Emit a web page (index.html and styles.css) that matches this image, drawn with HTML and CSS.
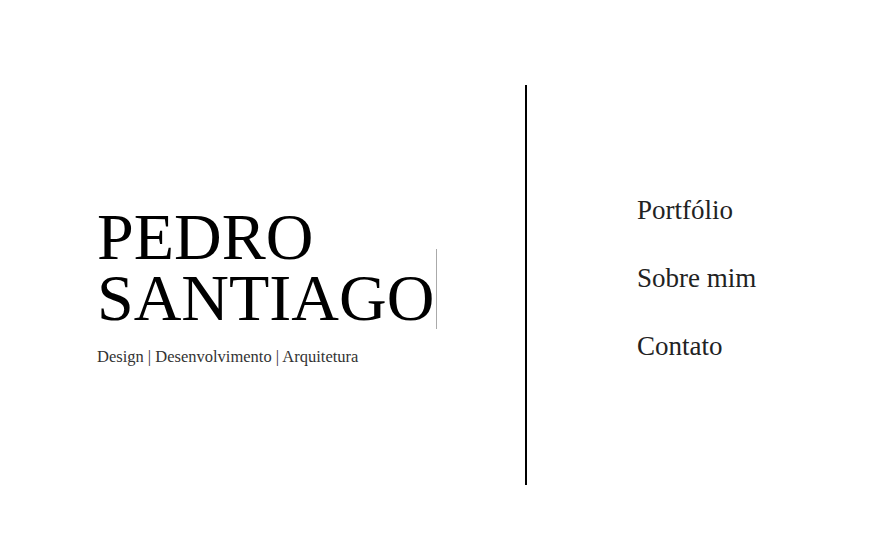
FILE: index.html
```html
<!DOCTYPE html>
<html lang="pt-BR">
<head>
<meta charset="utf-8">
<title>Pedro Santiago</title>
<link rel="stylesheet" href="styles.css">
</head>
<body>
<main class="page">
  <section class="intro">
    <h1 class="name">PEDRO<br><span class="typed">SANTIAGO</span></h1>
    <p class="tagline">Design | Desenvolvimento | Arquitetura</p>
  </section>
  <div class="divider"></div>
  <nav class="menu">
    <a href="#" class="menu-item">Portfólio</a>
    <a href="#" class="menu-item">Sobre mim</a>
    <a href="#" class="menu-item">Contato</a>
  </nav>
</main>
</body>
</html>
```
FILE: styles.css
```css
* { box-sizing: border-box; }
html, body {
  margin: 0;
  padding: 0;
  background: #fff;
}
body {
  font-family: "Liberation Serif", "DejaVu Serif", serif;
  color: #000;
}
.page {
  display: flex;
  align-items: center;
  height: 553px;
  padding-top: 17px;
}
.intro {
  width: 525px;
  padding-left: 97px;
  margin-top: 2px;
  display: flex;
  flex-direction: column;
}
.name {
  margin: 0;
  font-weight: 400;
  font-size: 66px;
  line-height: 61px;
  padding-top: 0;
  letter-spacing: 0;
}
.typed {
  display: inline-block;
  position: relative;
  padding-right: 3px;
}
.typed::after {
  content: "";
  position: absolute;
  right: 0;
  top: -18px;
  width: 1px;
  height: 80px;
  background: #aaa;
}
.tagline {
  margin: 19px 0 0 0;
  font-size: 16.5px;
  color: #333;
}
.divider {
  width: 2px;
  height: 400px;
  background: #000;
  flex-shrink: 0;
}
.menu {
  display: flex;
  flex-direction: column;
  gap: 38px;
  padding-left: 110px;
  margin-top: -14px;
}
.menu-item {
  font-size: 27px;
  line-height: 30px;
  color: #222;
  text-decoration: none;
}
```
